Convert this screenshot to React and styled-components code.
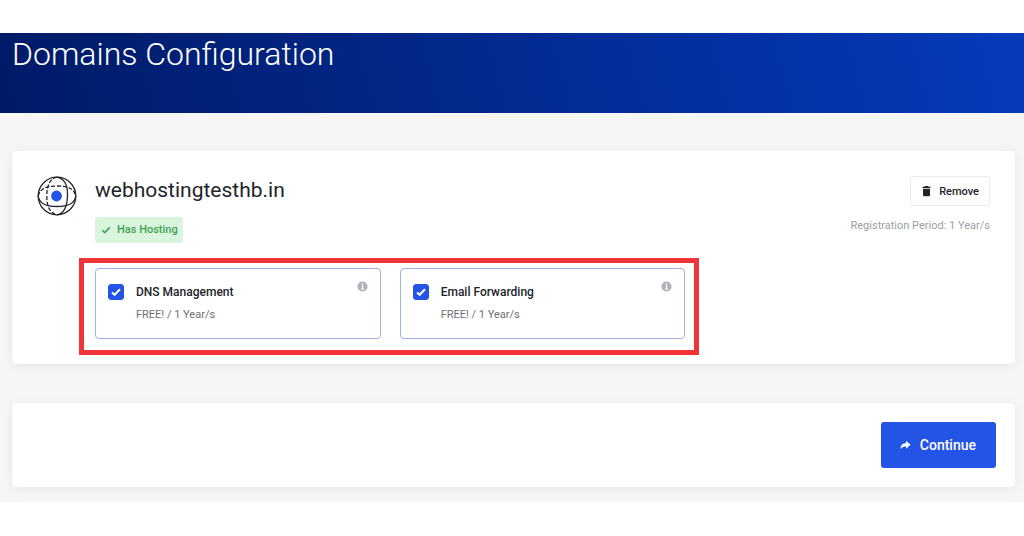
import React, { useState } from "react";
import styled, { createGlobalStyle } from "styled-components";

const GlobalStyle = createGlobalStyle`
  * {
    box-sizing: border-box;
  }

  body {
    margin: 0;
    background: #fff;
    color: #212529;
    font-family: Roboto, "Liberation Sans", sans-serif;
    font-size: 11px;
    line-height: 16px;
  }

  h1, h2, p {
    margin: 0;
  }

  button, input {
    font-family: inherit;
  }
`;

const Page = styled.div`
  padding: 33px 0;
`;

const Banner = styled.header`
  min-height: 80px;
  padding: 0 12px;
  background: linear-gradient(75deg, #001a66 0%, #053abb 100%);
`;

const BannerTitle = styled.h1`
  color: #fff;
  font-size: 32px;
  font-weight: 300;
  line-height: 42px;
`;

const Content = styled.main`
  display: flex;
  flex-direction: column;
  gap: 39px;
  padding: 38px 9px 15px 12px;
  background: #f6f6f6;
  overflow: hidden;
`;

const Card = styled.section`
  display: flex;
  gap: 18px;
  padding: 25px;
  border-radius: 5px;
  background: #fff;
  box-shadow: 0 2px 12px rgba(0, 0, 0, 0.07);
`;

const ActionCard = styled(Card)`
  justify-content: flex-end;
  padding: 19px;
`;

const CardBody = styled.div`
  flex: 1;
  display: flex;
  flex-direction: column;
  gap: 25px;
`;

const DomainHead = styled.div`
  display: flex;
  justify-content: space-between;
`;

const DomainColumn = styled.div`
  display: flex;
  flex-direction: column;
  align-items: ${({ $end }) => ($end ? "flex-end" : "flex-start")};
  gap: 12px;
`;

const DomainName = styled.h2`
  font-size: 21px;
  font-weight: 400;
  line-height: 29px;
`;

const Badge = styled.span`
  display: flex;
  align-items: center;
  gap: 5px;
  padding: 5px;
  border-radius: 3px;
  background: #daf4de;
  color: #3da255;
  font-weight: 500;
`;

const RemoveButton = styled.button`
  display: flex;
  align-items: center;
  gap: 7px;
  height: 30px;
  padding: 0 10px;
  border: 1px solid #ebebeb;
  border-radius: 3px;
  background: #fff;
  color: #212529;
  font-size: 11px;
  font-weight: 500;
  cursor: pointer;
`;

const Period = styled.p`
  color: #9b9fa5;
`;

const AddonGrid = styled.div`
  display: grid;
  grid-template-columns: repeat(3, 1fr);
  gap: 19px;
`;

const Highlight = styled.div`
  position: relative;
  grid-column: span 2;
  display: grid;
  grid-template-columns: subgrid;

  &::after {
    content: "";
    position: absolute;
    inset: -10px -14px -16px -16px;
    border: 5px solid #f03437;
    pointer-events: none;
  }
`;

const AddonBox = styled.div`
  display: flex;
  gap: 12px;
  padding: 12px 12px 15px;
  border: 1px solid #9fb0ea;
  border-radius: 4px;
`;

const CheckWrap = styled.span`
  position: relative;
  display: flex;
  width: 16px;
  height: 16px;
  margin-top: 3px;

  svg {
    position: absolute;
    inset: 0;
    pointer-events: none;
  }
`;

const Checkbox = styled.input`
  appearance: none;
  width: 16px;
  height: 16px;
  margin: 0;
  border: 1px solid #2354e6;
  border-radius: 3px;
  background: #fff;
  cursor: pointer;

  &:checked {
    background: #2354e6;
  }
`;

const AddonText = styled.div`
  flex: 1;
  display: flex;
  flex-direction: column;
  gap: 7px;
  padding-top: 3px;
`;

const AddonLabel = styled.label`
  font-size: 12px;
  font-weight: 500;
  cursor: pointer;
`;

const AddonPrice = styled.p`
  color: #6d7076;
`;

const InfoButton = styled.button`
  align-self: flex-start;
  display: flex;
  padding: 0;
  border: 0;
  background: none;
  cursor: help;
`;

const ContinueButton = styled.button`
  display: flex;
  align-items: center;
  gap: 9px;
  height: 46px;
  padding: 0 20px 0 19px;
  border: 0;
  border-radius: 3px;
  background: #2354e6;
  color: #fff;
  font-size: 14px;
  font-weight: 500;
  cursor: pointer;
`;

const GlobeIcon = () => (
  <svg width="40" height="40" viewBox="0 0 40 40" fill="none" stroke="#24262d" strokeWidth="1.3" aria-hidden="true">
    <circle cx="20" cy="20" r="18.8" />
    <path d="M20 1.2C27 2.500 30.500 8 30.500 18C30.500 30 27.500 37.500 20 38.8" />
    <path d="M1.2 20C2 27 9 30.500 20 30.500S38 27 38.8 20" />
    <path d="M20 1.2C12.500 3 9.800 10 9.800 20S12.500 37 20 38.8" strokeDasharray="4 1.8" />
    <path d="M1.2 20C3 12.500 9 10 20 10S37 12.500 38.8 20" strokeDasharray="4 1.8" />
    <circle cx="19.500" cy="20" r="5.400" fill="#2354e6" stroke="none" />
  </svg>
);

const TickIcon = () => (
  <svg width="12" height="10" viewBox="0 0 12 10" fill="none" stroke="currentColor" strokeWidth="1.6" aria-hidden="true">
    <path d="M2.400 5.2L4.800 7.600L9.800 2.400" />
  </svg>
);

const TrashIcon = () => (
  <svg width="11" height="12" viewBox="0 0 11 12" fill="currentColor" aria-hidden="true">
    <path d="M4 1h3l.6.8H9.500V3h-8V1.800H3.400zM2 3.800h7v6.200a1.200 1.200 0 0 1-1.200 1.200H3.200A1.200 1.200 0 0 1 2 10z" />
  </svg>
);

const InfoIcon = () => (
  <svg width="11" height="11" viewBox="0 0 11 11" aria-hidden="true">
    <circle cx="5.500" cy="5.500" r="5" fill="#adb1ba" />
    <path d="M5.500 2.300v1.400M4.500 5h1.200v3M4.300 8.200h2.600" fill="none" stroke="#fff" strokeWidth="1.200" />
  </svg>
);

const ArrowIcon = () => (
  <svg width="11" height="10" viewBox="0 0 11 10" fill="currentColor" aria-hidden="true">
    <path d="M6 .8L10.600 4.800L6 8.800V6.500C3.400 6.300 1.700 7.200.6 9C.6 5.600 2.700 3.400 6 3.100z" />
  </svg>
);

const Addon = ({ id, name, price }) => {
  const [checked, setChecked] = useState(true);

  return (
    <AddonBox>
      <CheckWrap>
        <Checkbox type="checkbox" id={id} checked={checked} onChange={(e) => setChecked(e.target.checked)} />
        {checked && (
          <svg width="16" height="16" viewBox="0 0 16 16" fill="none" stroke="#fff" strokeWidth="2" aria-hidden="true">
            <path d="M4 8.400L6.600 10.800L12 5.200" />
          </svg>
        )}
      </CheckWrap>
      <AddonText>
        <AddonLabel htmlFor={id}>{name}</AddonLabel>
        <AddonPrice>{price}</AddonPrice>
      </AddonText>
      <InfoButton type="button" aria-label={`About ${name}`}>
        <InfoIcon />
      </InfoButton>
    </AddonBox>
  );
};

const addons = [
  { id: "dns", name: "DNS Management", price: "FREE! / 1 Year/s" },
  { id: "email", name: "Email Forwarding", price: "FREE! / 1 Year/s" },
];

const App = () => {
  return (
    <Page>
      <GlobalStyle />
      <Banner>
        <BannerTitle>Domains Configuration</BannerTitle>
      </Banner>
      <Content>
        <Card>
          <GlobeIcon />
          <CardBody>
            <DomainHead>
              <DomainColumn>
                <DomainName>webhostingtesthb.in</DomainName>
                <Badge>
                  <TickIcon />
                  Has Hosting
                </Badge>
              </DomainColumn>
              <DomainColumn $end>
                <RemoveButton type="button">
                  <TrashIcon />
                  Remove
                </RemoveButton>
                <Period>Registration Period: 1 Year/s</Period>
              </DomainColumn>
            </DomainHead>
            <AddonGrid>
              <Highlight>
                {addons.map((addon) => (
                  <Addon key={addon.id} {...addon} />
                ))}
              </Highlight>
            </AddonGrid>
          </CardBody>
        </Card>
        <ActionCard>
          <ContinueButton type="button">
            <ArrowIcon />
            Continue
          </ContinueButton>
        </ActionCard>
      </Content>
    </Page>
  );
};

export default App;
